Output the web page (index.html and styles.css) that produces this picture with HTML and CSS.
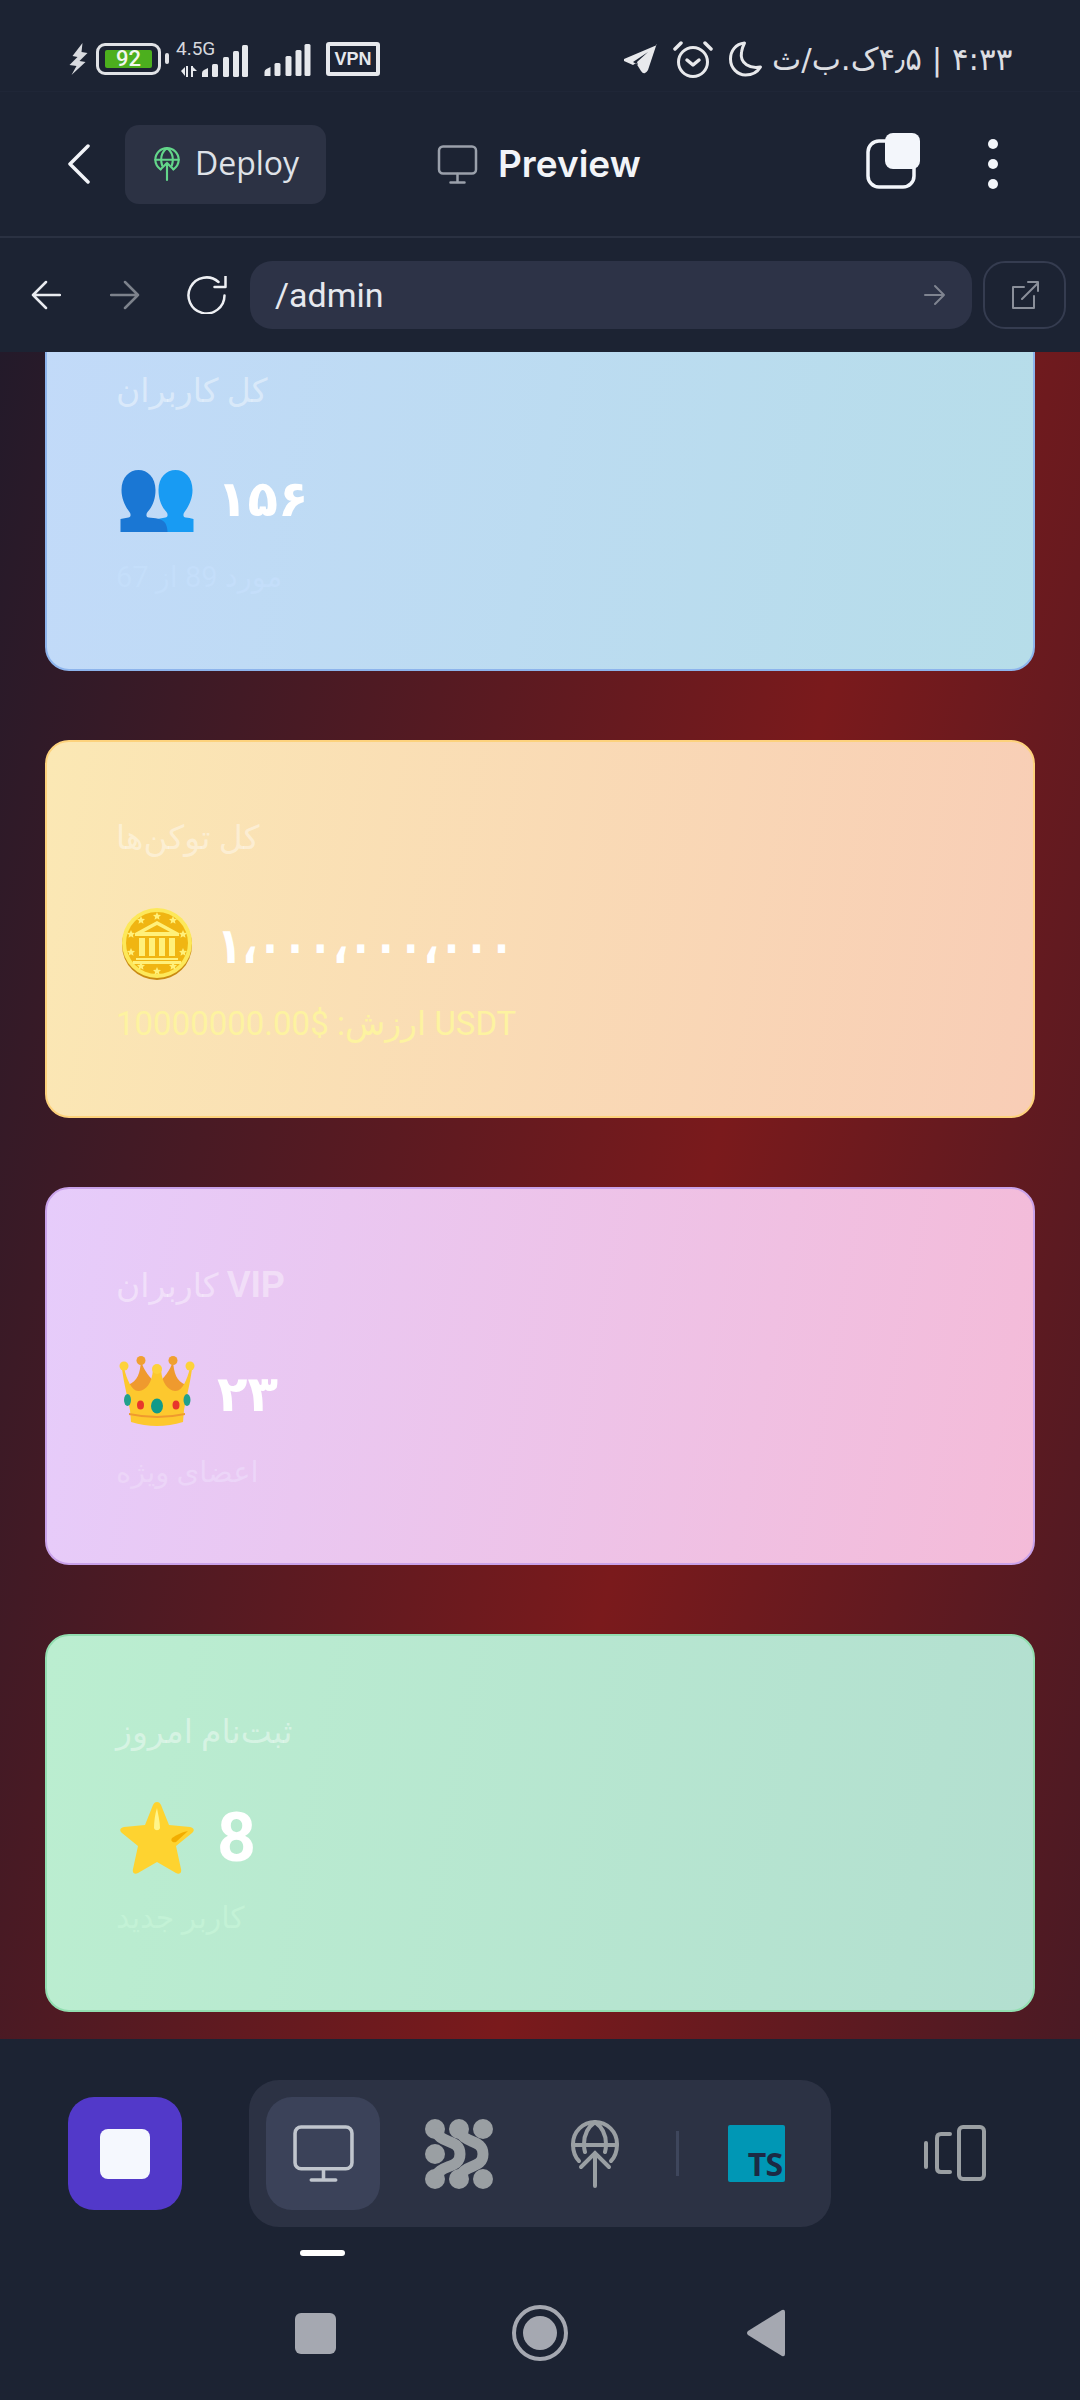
FILE: index.html
```html
<!DOCTYPE html>
<html lang="fa">

<head>
    <meta charset="UTF-8">
    <meta name="viewport" content="width=device-width, initial-scale=1.0">
    <title>Preview</title>
    <link rel="stylesheet" href="styles.css">
</head>

<body>
    <!-- status bar -->
    <div class="status-bar">
        <svg class="bolt" width="19" height="32" viewBox="0 0 18 32"><path d="M13 0 3 13l5 1-8 8 7 1-5 9 14-13-6-1 8-8-6-1z" fill="#d9dbe0"/></svg>
        <div class="battery"><span class="battery-level">92</span></div>
        <div class="net">
            <span class="net-label">4.5G</span>
            <svg width="48" height="32" viewBox="0 0 46 32" fill="#e6e8ec">
                <path d="M0 32v-4q0-2 2-3l4-2v9z"/><rect x="10" y="19" width="6" height="13" rx="1.5"/><rect x="21" y="12" width="6" height="20" rx="1.5"/><rect x="31" y="6" width="6" height="26" rx="1.5"/><rect x="40" y="0" width="6" height="32" rx="1.5"/>
            </svg>
            <svg class="net-arrows" width="16" height="11" viewBox="0 0 16 11" fill="#e6e8ec"><path d="M0 5 4 1v9zM5 0h2v11H5zM10 0h2v11h-2zM12 1l4 4h-4z"/></svg>
        </div>
        <svg class="signal" width="49" height="32" viewBox="0 0 46 32" fill="#e6e8ec">
            <path d="M0 32v-4q0-2 2-3l4-2v9z"/><rect x="10" y="19" width="6" height="13" rx="1.5"/><rect x="21" y="12" width="6" height="20" rx="1.5"/><rect x="31" y="6" width="6" height="26" rx="1.5"/><rect x="40" y="0" width="6" height="32" rx="1.5"/>
        </svg>
        <span class="vpn">VPN</span>
        <svg class="st-telegram" width="34" height="30" viewBox="0 0 34 30"><path d="M33 1 0 15q-1 1 0 2l9 4 3-2 5 8q2 3 4 2t3-3l8-24q1-2 1-2zM24 8 13 18l1 3-5-3z" fill="#e8e9ec"/></svg>
        <svg class="st-alarm" width="40" height="38" viewBox="0 0 40 38" fill="none" stroke="#e8e9ec" stroke-width="3" stroke-linecap="round" stroke-linejoin="round"><circle cx="20" cy="22" r="14.5"/><path d="M14 20l6 5 6-5" stroke-width="3.5"/><path d="M2 9l6-6M38 9l-6-6" stroke-width="3.5"/></svg>
        <svg class="st-moon" width="35" height="36" viewBox="0 0 34 36" fill="none" stroke="#e8e9ec" stroke-width="3"><path d="M16 2C7 3 2 10 2 18c0 9 7 16 15 16 7 0 12-3 15-8-10 2-21-3-19-15 .4-3 1.500-6 3-9z" stroke-linejoin="round"/></svg>
        <span class="st-text" dir="rtl">۴:۳۳ | ۴٫۵ک.ب/ث</span>
    </div>

    <!-- top bar -->
    <header class="top-bar">
        <svg class="chevron" width="22" height="40" viewBox="0 0 22 40" fill="none" stroke="#f2f4f8" stroke-width="3.5" stroke-linecap="round" stroke-linejoin="round"><path d="M20 2 2 20l18 18"/></svg>
        <button class="deploy-btn">
            <svg width="26" height="34" viewBox="0 0 48 64" fill="none" stroke="#63d68a" stroke-width="4" stroke-linecap="round"><path d="M12 42C5 37 2 31 2 24a22 22 0 0 1 44 0c0 7-3 13-10 18"/><path d="M2 24h44M24 2c-7 5-11 13-11 22 0 5 1 8 2 11M24 2c7 5 11 13 11 22 0 5-1 8-2 11"/><path d="M24 62V30M12 42l12-12 12 12"/></svg>
            <span class="deploy-label">Deploy</span>
        </button>
        <div class="page-title">
            <svg width="41" height="39" viewBox="0 0 40 39" fill="none" stroke="#9aa0ab" stroke-width="2.500" stroke-linecap="round"><rect x="1.500" y="1.500" width="37" height="27" rx="4"/><path d="M20 29v8M13 37.500h14"/></svg>
            <span class="page-title-text">Preview</span>
        </div>
        <svg class="copy-icon" width="56" height="56" viewBox="0 0 54 56"><rect x="2" y="8" width="46" height="46" rx="11" fill="none" stroke="#f3f6fb" stroke-width="3.500"/><rect x="19" y="0" width="35" height="36" rx="8" fill="#f3f6fb"/></svg>
        <div class="more-dots"><i></i><i></i><i></i></div>
    </header>

    <!-- url bar -->
    <nav class="url-bar">
        <svg width="30" height="30" viewBox="0 0 30 30" fill="none" stroke="#e9ebf0" stroke-width="2.500" stroke-linecap="round" stroke-linejoin="round"><path d="M29 15H2M15 2 2 15l13 13"/></svg>
        <svg class="forward" width="30" height="30" viewBox="0 0 30 30" fill="none" stroke="#7d828c" stroke-width="2.500" stroke-linecap="round" stroke-linejoin="round"><path d="M1 15h27M15 2l13 13-13 13"/></svg>
        <svg class="refresh" width="41" height="38" viewBox="0 0 40 38" fill="none" stroke="#eef0f4" stroke-width="2.500" stroke-linecap="round" stroke-linejoin="round"><path d="M37 19.500A18 18 0 1 1 31 6"/><path d="M38 0v11H27"/></svg>
        <div class="url-input">
            <span>/admin</span>
            <svg width="22" height="22" viewBox="0 0 22 22" fill="none" stroke="#7f8490" stroke-width="2" stroke-linecap="round" stroke-linejoin="round"><path d="M1 11h19M11 2l9 9-9 9"/></svg>
        </div>
        <button class="open-btn">
            <svg width="28" height="28" viewBox="0 0 28 28" fill="none" stroke="#8a8f9a" stroke-width="2" stroke-linecap="round" stroke-linejoin="round"><path d="M13 6H2v21h21V15"/><path d="M11 18 27 2M17 1h10v9"/></svg>
        </button>
    </nav>

    <!-- stats -->
    <main class="content">
        <section class="stat-card card-blue">
            <h3 class="stat-title" dir="rtl">کل کاربران</h3>
            <div class="stat-value">
                <svg class="emoji emoji-people" width="76" height="62" viewBox="0 0 73 62"><path d="M55 0c9 0 17 7 17 20 0 9-4 17-8 22-2 3-1 5 1 5.500 3 .5 5 .5 8 1.500v13H37V49l8-1.500c2-.5 3-2.500 1-5.500-5-5-8-13-8-22C38 7 46 0 55 0z" fill="#189bf3"/><path d="M18 0c9 0 17 7 17 20 0 9-3 17-8 22-2 3-1 5 1 5.500 6 .5 14 1 17 6 1 2 2 5 2 8.500H0V49l8-1.500c2-.5 3-2.500 1-5.500C5 37 1 29 1 20 1 7 9 0 18 0z" fill="#1a77d4"/></svg>
                <span class="stat-num fa-num">۱۵۶</span>
            </div>
            <p class="stat-sub sub-blue" dir="rtl">مورد 89 از 67</p>
        </section>

        <section class="stat-card card-gold">
            <h3 class="stat-title" dir="rtl">کل توکن‌ها</h3>
            <div class="stat-value">
                <svg class="emoji" width="76" height="76" viewBox="0 0 72 76">
                    <defs><path id="st" d="M0-4 1.200-1.300 4-1 1.900.9 2.500 3.800 0 2.300-2.500 3.800-1.900.9-4-1-1.200-1.300z" fill="#fff07a"/></defs>
                    <circle cx="36" cy="39" r="35" fill="#c98a12"/>
                    <circle cx="36" cy="37" r="35" fill="#fde85a"/>
                    <circle cx="36" cy="37" r="31" fill="#f0b512"/>
                    <use href="#st" x="36" y="10"/><use href="#st" x="20" y="14"/><use href="#st" x="52" y="14"/><use href="#st" x="10" y="28"/><use href="#st" x="62" y="28"/><use href="#st" x="10" y="46"/><use href="#st" x="62" y="46"/><use href="#st" x="20" y="60"/><use href="#st" x="52" y="60"/><use href="#st" x="36" y="65"/>
                    <path d="M36 15 14 27v3h44v-3zM36 19l13 7H23z" fill="#fff07a"/>
                    <path d="M18 32h6v18h-6zM28 32h6v18h-6zM38 32h6v18h-6zM48 32h6v18h-6zM15 52h42v2H15zM12 55h48v3H12z" fill="#fff07a"/>
                </svg>
                <span class="stat-num fa-num fa-long">۱،۰۰۰،۰۰۰،۰۰۰</span>
            </div>
            <p class="stat-sub sub-gold" dir="rtl">USDT ارزش: $10000000.00</p>
        </section>

        <section class="stat-card card-purple">
            <h3 class="stat-title" dir="rtl"><b>VIP</b> کاربران</h3>
            <div class="stat-value">
                <svg class="emoji" width="76" height="72" viewBox="0 0 74 72">
                    <path d="M21 5C20 17 18 25 8 29l6 22h46l6-22C56 25 54 17 53 5 50 15 44 22 37 28 30 22 24 15 21 5z" fill="#ef9a2e"/>
                    <path d="M4 12c3 12 8 24 15 23 7-1 13-7 14-22h8c1 15 7 21 14 22 7 1 12-11 15-23l2 1c-2 15-6 30-8 41l-1 12q-26 8-52 0l-1-12C8 43 4 28 2 13z" fill="#fdc82e"/>
                    <circle cx="4" cy="10" r="4.500" fill="#fdd23a"/><circle cx="70" cy="10" r="4.500" fill="#fdd23a"/><circle cx="21" cy="4.500" r="4.500" fill="#f0a030"/><circle cx="53" cy="4.500" r="4.500" fill="#f0a030"/><circle cx="37" cy="13" r="5" fill="#fdd23a"/>
                    <ellipse cx="7.500" cy="44" rx="3.500" ry="6" fill="#22a08c"/><ellipse cx="67" cy="44" rx="3.500" ry="6" fill="#22a08c"/><ellipse cx="37" cy="50" rx="6" ry="7.500" fill="#109a8a"/><ellipse cx="20.500" cy="49" rx="3.500" ry="4.500" fill="#e8362c"/><ellipse cx="56" cy="49" rx="3.500" ry="4.500" fill="#e8362c"/>
                    <path d="M9 57q28 6 56 0v2q-28 6-56 0z" fill="#ef9a2e"/>
                </svg>
                <span class="stat-num fa-num">۲۳</span>
            </div>
            <p class="stat-sub sub-purple" dir="rtl">اعضای ویژه</p>
        </section>

        <section class="stat-card card-green">
            <h3 class="stat-title" dir="rtl">ثبت‌نام امروز</h3>
            <div class="stat-value">
                <svg class="emoji" width="76" height="72" viewBox="0 0 74 72">
                    <path d="M37 0c2 0 3 1 4 3l8 20 21 2c4 1 5 3 2 6L56 44l5 23c1 4-2 6-5 4L37 60 18 71c-3 2-6 0-5-4l5-23L2 31c-3-3-2-5 2-6l21-2 8-20c1-2 2-3 4-3z" fill="#fed330"/>
                    <path d="M37 6c1 6 3 14 3 20-1 3-5 3-6 0 0-6 1-14 3-20z" fill="#fff58a"/>
                    <path d="M68 29 56 40c-3 1-6-1-4-4 4-3 11-6 16-7z" fill="#f2ad00"/>
                </svg>
                <span class="stat-num">8</span>
            </div>
            <p class="stat-sub sub-green" dir="rtl">کاربر جدید</p>
        </section>
    </main>

    <!-- bottom toolbar -->
    <footer class="bottom-bar">
        <div class="tool-row">
            <button class="stop-btn"><i></i></button>
            <div class="tab-panel">
                <div class="tab active">
                    <svg width="61" height="57" viewBox="0 0 60 56" fill="none" stroke="#c0c5cd" stroke-width="3.500" stroke-linecap="round"><rect x="2" y="2" width="56" height="41" rx="6"/><path d="M30 43v11M18 54h24"/></svg>
                </div>
                <div class="tab">
                    <svg width="68" height="70" viewBox="0 0 68 70" fill="#9a9fa3" stroke="none">
                        <circle cx="10" cy="10" r="10"/><circle cx="34" cy="10" r="10"/><circle cx="58" cy="10" r="10"/><circle cx="10" cy="35" r="10"/><circle cx="10" cy="60" r="10"/><circle cx="34" cy="60" r="10"/><circle cx="58" cy="60" r="10"/>
                        <g fill="none" stroke="#9a9fa3" stroke-width="11"><path d="M10 10c4 16 25 9 25 25s-21 9-25 25"/><path d="M34 10c4 16 24 9 24 25s-20 9-24 25"/></g>
                    </svg>
                </div>
                <div class="tab tab-globe">
                    <svg width="50" height="68" viewBox="0 0 48 68" fill="none" stroke="#9a9fa3" stroke-width="4" stroke-linecap="round"><path d="M8 41C4 37 2 30 2 24a22 22 0 0 1 44 0c0 6-2 13-6 17"/><path d="M2 25h44M24 2c-7 5-11 13-11 22 0 3 0 5 1 8M24 2c7 5 11 13 11 22 0 3 0 5-1 8"/><path d="M24 66V33M10 47l14-14 14 14"/></svg>
                </div>
                <span class="tab-divider"></span>
                <div class="ts-logo"><span>TS</span></div>
            </div>
            <svg class="device-icon" width="64" height="56" viewBox="0 0 62 56" fill="none" stroke="#9a9fa3" stroke-width="4" stroke-linecap="round" stroke-linejoin="round"><path d="M2 18v24"/><path d="M26 9h-9q-4 0-4 4v30q0 4 4 4h9"/><rect x="35" y="2" width="25" height="52" rx="4"/></svg>
        </div>
        <div class="tab-indicator"></div>
        <div class="sys-nav">
            <i class="sys-square"></i>
            <i class="sys-circle"></i>
            <svg width="38" height="48" viewBox="0 0 38 48"><path d="M35 1 1 22q-2 2 0 4l34 21q3 1 3-2V3q0-3-3-2z" fill="#a5a8b1"/></svg>
        </div>
    </footer>
</body>

</html>
```

FILE: styles.css
```css
* {
    box-sizing: border-box;
}

html,
body {
    margin: 0;
    height: 2400px;
    overflow: hidden;
}

body {
    display: flex;
    flex-direction: column;
    background-color: #1c2333;
    font-family: Roboto, "DejaVu Sans", sans-serif;
    color: #f2f4f8;
}

svg {
    display: block;
    flex-shrink: 0;
}

button {
    border: none;
    padding: 0;
    font: inherit;
    color: inherit;
}

/* Status bar */
.status-bar {
    height: 92px;
    display: flex;
    align-items: center;
    padding-left: 69px;
    padding-top: 26px;
    border-bottom: 1px solid #1f2637;
}

.battery {
    position: relative;
    width: 65px;
    height: 32px;
    margin-left: 8px;
    padding: 4px 6px;
    border: 3px solid #e0e2e6;
    border-radius: 9px;
}

.battery::after {
    content: "";
    position: absolute;
    right: -11px;
    top: 7px;
    width: 4px;
    height: 11px;
    border-radius: 2px;
    background-color: #e0e2e6;
}

.battery-level {
    display: block;
    height: 18px;
    border-radius: 2px;
    background-color: #4caf1e;
    font-size: 22px;
    font-weight: 500;
    line-height: 18px;
    text-align: center;
    color: #f2f6ee;
}

.net {
    position: relative;
    width: 73px;
    height: 36px;
    margin-left: 15px;
}

.net svg {
    position: absolute;
    right: 0;
    bottom: 0;
}

.net .net-arrows {
    left: 5px;
    right: auto;
    bottom: 0;
}

.net-label {
    position: absolute;
    left: 0;
    top: -3px;
    font-size: 19px;
    line-height: 22px;
    color: #d6d8dd;
}

.signal {
    margin-left: 14px;
    margin-top: 2px;
}

.vpn {
    width: 54px;
    height: 34px;
    margin-left: 14px;
    border: 4px solid #e6e8ec;
    border-radius: 3px;
    font-family: "Liberation Sans", sans-serif;
    font-size: 18px;
    font-weight: 700;
    line-height: 26px;
    text-align: center;
    color: #e6e8ec;
}

.st-telegram {
    margin-left: 244px;
}

.st-alarm {
    margin-left: 15px;
}

.st-moon {
    margin-left: 15px;
}

.st-text {
    margin-left: 9px;
    font-family: "DejaVu Sans", sans-serif;
    font-size: 31px;
    white-space: nowrap;
    color: #dcdee2;
}

/* Top bar */
.top-bar {
    height: 146px;
    display: flex;
    align-items: center;
    padding-left: 68px;
    border-bottom: 2px solid #2a3142;
}

.deploy-btn {
    width: 201px;
    height: 79px;
    margin-left: 35px;
    padding-left: 29px;
    display: flex;
    align-items: center;
    gap: 15px;
    border-radius: 14px;
    background-color: #2c3244;
    font-family: "Open Sans", sans-serif;
    font-size: 32px;
    color: #dfe2e8;
}

.deploy-label {
    margin-bottom: 3px;
}

.page-title {
    margin-left: 111px;
    display: flex;
    align-items: center;
    gap: 20px;
    font-family: Inter, sans-serif;
    font-size: 37px;
    font-weight: 600;
}

.page-title-text {
    margin-bottom: 2px;
}

.copy-icon {
    margin-left: 224px;
    margin-top: -6px;
}

.more-dots {
    margin-left: 67px;
    display: flex;
    flex-direction: column;
    gap: 10px;
}

.more-dots i {
    display: block;
    width: 10px;
    height: 10px;
    border-radius: 50%;
    background-color: #f3f6fb;
}

/* Url bar */
.url-bar {
    height: 114px;
    display: flex;
    align-items: center;
    padding-left: 31px;
}

.forward {
    margin-left: 49px;
}

.refresh {
    margin-left: 47px;
}

.url-input {
    width: 722px;
    height: 68px;
    margin-left: 22px;
    padding: 0 26px 0 25px;
    display: flex;
    align-items: center;
    justify-content: space-between;
    border-radius: 22px;
    background-color: #2d3347;
    font-size: 34px;
    color: #e6e8ee;
}

.open-btn {
    width: 83px;
    height: 68px;
    margin-left: 11px;
    display: flex;
    align-items: center;
    justify-content: center;
    border: 2px solid #353c50;
    border-radius: 22px;
    background-color: transparent;
}

/* Stat cards */
.content {
    flex: 1;
    min-height: 0;
    overflow: hidden;
    padding: 0 45px;
    display: flex;
    flex-direction: column;
    gap: 69px;
    background: linear-gradient(103.8deg, #231a2a 0%, #7a1a1c 61%, #4a1a24 100%);
}

.stat-card {
    flex-shrink: 0;
    height: 378px;
    padding: 72px 69px 0;
    border: 2px solid;
    border-radius: 24px;
}

.stat-card:first-child {
    margin-top: -59px;
}

.card-blue {
    border-color: #8db4ec;
    background: linear-gradient(100deg, #c2daf9, #b6dde9);
}

.card-gold {
    border-color: #fdd27c;
    background: linear-gradient(100deg, #fbe8b4, #f8cdb6);
}

.card-purple {
    border-color: #c9a2ea;
    background: linear-gradient(100deg, #e6ccfb, #f4bbd8);
}

.card-green {
    border-color: #92deb0;
    background: linear-gradient(100deg, #bbeed0, #b3dfd0);
}

.stat-title {
    width: max-content;
    margin: 0;
    font-size: 33px;
    font-weight: 400;
    line-height: 48px;
    color: rgba(255, 255, 255, 0.42);
}

.stat-title b {
    font-family: "Liberation Sans", sans-serif;
    font-size: 36px;
    font-weight: 700;
}

.stat-value {
    height: 76px;
    margin-top: 44px;
    display: flex;
    align-items: center;
    gap: 22px;
}

.emoji {
    margin-left: 3px;
}

.emoji-people {
    margin-top: 8px;
}

.stat-num {
    font-size: 68px;
    font-weight: 700;
    line-height: 76px;
    color: #fff;
}

.fa-num {
    padding-top: 4px;
    font-size: 50px;
}

/* arabic runs ignore letter-spacing, so squeeze the long number instead */
.fa-long {
    transform: scaleX(0.82);
    transform-origin: left center;
}

.stat-sub {
    width: max-content;
    margin: 22px 0 0;
    font-size: 29px;
    line-height: 40px;
}

.sub-blue {
    color: #c4defa;
}

.sub-gold {
    font-size: 33px;
    color: #fdf3a0;
}

.sub-purple {
    color: #ecd5f8;
}

.sub-green {
    font-size: 30px;
    color: #c3f2d6;
}

/* Bottom toolbar */
.bottom-bar {
    height: 361px;
    flex-shrink: 0;
}

.tool-row {
    height: 188px;
    padding-left: 68px;
    padding-top: 41px;
    display: flex;
    align-items: flex-start;
}

.stop-btn {
    width: 114px;
    height: 113px;
    margin-top: 17px;
    display: flex;
    align-items: center;
    justify-content: center;
    border-radius: 26px;
    background-color: #5239c9;
}

.stop-btn i {
    display: block;
    width: 50px;
    height: 50px;
    border-radius: 8px;
    background-color: #f5f8fe;
}

.tab-panel {
    width: 582px;
    height: 147px;
    margin-left: 67px;
    padding: 0 17px;
    display: flex;
    align-items: center;
    border-radius: 30px;
    background-color: #2c3244;
}

.tab {
    width: 114px;
    height: 113px;
    margin-right: 22px;
    display: flex;
    align-items: center;
    justify-content: center;
    border-radius: 26px;
}

.tab.active {
    background-color: #3b4259;
}

.tab-globe {
    margin-right: 24px;
}

.tab-divider {
    width: 3px;
    height: 45px;
    background-color: #3e465c;
}

.ts-logo {
    width: 57px;
    height: 57px;
    margin-left: 49px;
    padding: 0 3px 1px 0;
    display: flex;
    align-items: flex-end;
    justify-content: flex-end;
    border-radius: 2px;
    background-color: #0097b5;
}

.ts-logo span {
    font-family: "Open Sans", sans-serif;
    font-size: 32px;
    font-weight: 700;
    line-height: 34px;
    letter-spacing: -1px;
    color: #1c2a44;
}

.device-icon {
    margin-left: 92px;
    margin-top: 45px;
}

.tab-indicator {
    width: 45px;
    height: 6px;
    margin: 23px 0 0 300px;
    border-radius: 3px;
    background-color: #fff;
}

.sys-nav {
    height: 56px;
    margin-top: 49px;
    padding-left: 295px;
    display: flex;
    align-items: center;
}

.sys-square {
    width: 41px;
    height: 41px;
    border-radius: 6px;
    background-color: #a5a8b1;
}

.sys-circle {
    position: relative;
    width: 56px;
    height: 56px;
    margin-left: 176px;
    margin-right: 179px;
    border: 4px solid #a5a8b1;
    border-radius: 50%;
}

.sys-circle::after {
    content: "";
    position: absolute;
    inset: 7px;
    border-radius: 50%;
    background-color: #a5a8b1;
}
```
